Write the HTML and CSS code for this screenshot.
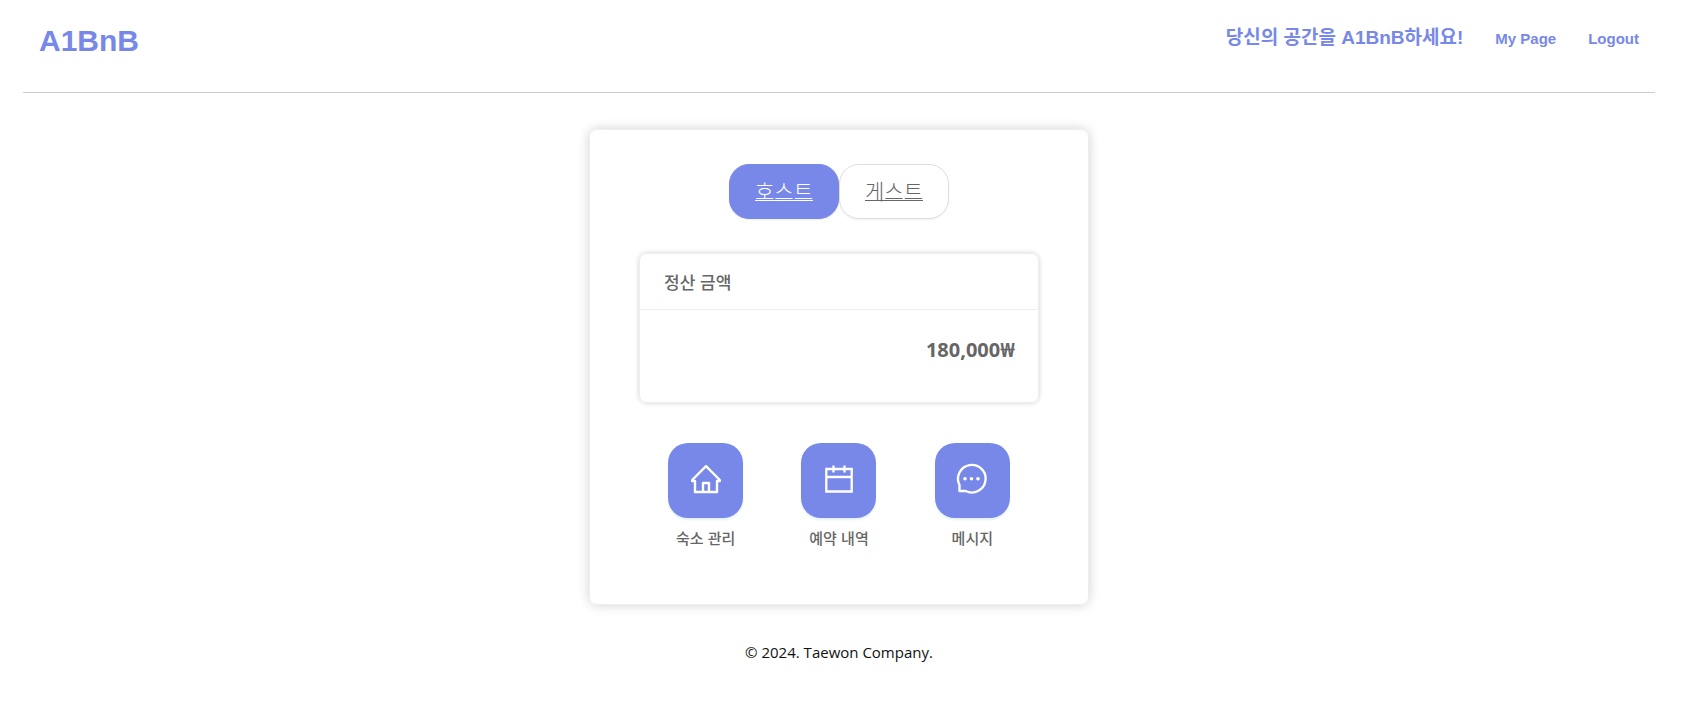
FILE: index.html
```html
<!DOCTYPE html>
<html lang="ko">
<head>
<meta charset="utf-8">
<meta name="viewport" content="width=device-width, initial-scale=1">
<title>A1BnB</title>
<link rel="stylesheet" href="styles.css">
</head>
<body>
<header class="header">
  <a class="logo" href="#">A1BnB</a>
  <nav class="nav">
    <a class="nav-host" href="#">당신의 공간을 A1BnB하세요!</a>
    <a class="nav-link" href="#">My Page</a>
    <a class="nav-link" href="#">Logout</a>
  </nav>
</header>
<main class="card">
  <nav class="tabs">
    <a class="tab tab-active" href="#">호스트</a>
    <a class="tab" href="#">게스트</a>
  </nav>
  <section class="balance">
    <h2 class="balance-title">정산 금액</h2>
    <p class="balance-amount">180,000₩</p>
  </section>
  <div class="menu">
    <a class="menu-item" href="#">
      <span class="menu-icon">
        <svg width="32" height="32" viewBox="0 0 32 32" fill="none" stroke="currentColor" stroke-width="2.400" stroke-linejoin="round" aria-hidden="true">
          <path d="M2.200 17 16 3.200 29.800 17v1H27v11H5V18H2.200ZM13 29v-9h6v9"/>
        </svg>
      </span>
      <span class="menu-label">숙소 관리</span>
    </a>
    <a class="menu-item" href="#">
      <span class="menu-icon">
        <svg width="32" height="32" viewBox="0 0 32 32" fill="none" stroke="currentColor" stroke-width="2.300" aria-hidden="true">
          <path d="M3.300 6h25.400v22.500H3.300ZM3.300 14h25.400M10.500 2.500v7M21.500 2.500v7"/>
        </svg>
      </span>
      <span class="menu-label">예약 내역</span>
    </a>
    <a class="menu-item" href="#">
      <span class="menu-icon">
        <svg width="32" height="32" viewBox="0 0 32 32" fill="none" stroke="currentColor" stroke-width="2.400" stroke-linejoin="round" aria-hidden="true">
          <path d="M3.500 28v-6A13.800 13.800 0 1 1 9.500 28Z"/>
          <g fill="currentColor" stroke="none"><circle cx="9" cy="15.700" r="1.800"/><circle cx="15.500" cy="15.700" r="1.800"/><circle cx="22" cy="15.700" r="1.800"/></g>
        </svg>
      </span>
      <span class="menu-label">메시지</span>
    </a>
  </div>
</main>
<footer class="footer">© 2024. Taewon Company.</footer>
</body>
</html>
```
FILE: styles.css
```css
* { box-sizing: border-box; }

body {
  margin: 0;
  padding: 0 50px 0 23px;
  background: #fff;
  color: #666;
  font-family: "Noto Sans", "Noto Sans CJK KR", sans-serif;
}

a { color: inherit; text-decoration: none; }

.header {
  display: flex;
  justify-content: space-between;
  align-items: flex-start;
  height: 93px;
  padding: 24px 16px 0;
  border-bottom: 1px solid #ccc;
  color: #7788e8;
  font-family: "Liberation Sans", "Noto Sans CJK KR", sans-serif;
  font-weight: 700;
}

.logo { font-size: 30px; line-height: 34px; }

.nav {
  display: flex;
  align-items: baseline;
  gap: 32px;
  line-height: 28px;
}

.nav-host { font-size: 19px; }
.nav-link { font-size: 15px; }

.card {
  width: 500px;
  max-width: 100%;
  margin: 36px auto 0;
  padding: 34px 49px 54px;
  border: 1px solid #eee;
  border-radius: 8px;
  box-shadow: 0 0 12px rgba(0, 0, 0, 0.18);
}

.tabs { display: flex; justify-content: center; }

.tab {
  width: 110px;
  height: 55px;
  border: 1px solid #ddd;
  border-radius: 20px;
  box-shadow: 0 1px 2px rgba(0, 0, 0, 0.06);
  font-family: "Noto Sans CJK KR", sans-serif;
  font-size: 21px;
  font-weight: 300;
  line-height: 51px;
  text-align: center;
  text-decoration: underline;
  text-decoration-thickness: 1px;
  text-underline-offset: 1px;
}

.tab-active {
  border-color: #7788e8;
  background: #7788e8;
  color: #fff;
}

.balance {
  margin-top: 34px;
  border: 1px solid #eee;
  border-radius: 8px;
  box-shadow: 0 0 5px rgba(0, 0, 0, 0.18);
}

.balance-title {
  margin: 0;
  padding: 0 24px;
  border-bottom: 1px solid #eee;
  font-family: "Noto Sans CJK KR", sans-serif;
  font-size: 17px;
  font-weight: 500;
  line-height: 55px;
}

.balance-amount {
  margin: 0;
  padding: 24px 23px 36px;
  font-size: 20px;
  font-weight: 700;
  line-height: 32px;
  text-align: right;
}

.menu {
  display: grid;
  grid-template-columns: repeat(3, 1fr);
  margin-top: 40px;
}

.menu-item {
  display: flex;
  flex-direction: column;
  align-items: center;
  gap: 8px;
}

.menu-icon {
  display: flex;
  justify-content: center;
  width: 75px;
  height: 75px;
  padding-top: 20px;
  border-radius: 20px;
  background: #7788e8;
  box-shadow: 0 2px 2px #e6f2ff;
  color: #fff;
}

.menu-label {
  font-family: "Noto Sans CJK KR", sans-serif;
  font-size: 15px;
  font-weight: 500;
  line-height: 24px;
}

.footer {
  margin-top: 35px;
  padding-bottom: 40px;
  color: #111;
  font-family: "Open Sans", sans-serif;
  font-size: 15px;
  line-height: 24px;
  text-align: center;
}
```
